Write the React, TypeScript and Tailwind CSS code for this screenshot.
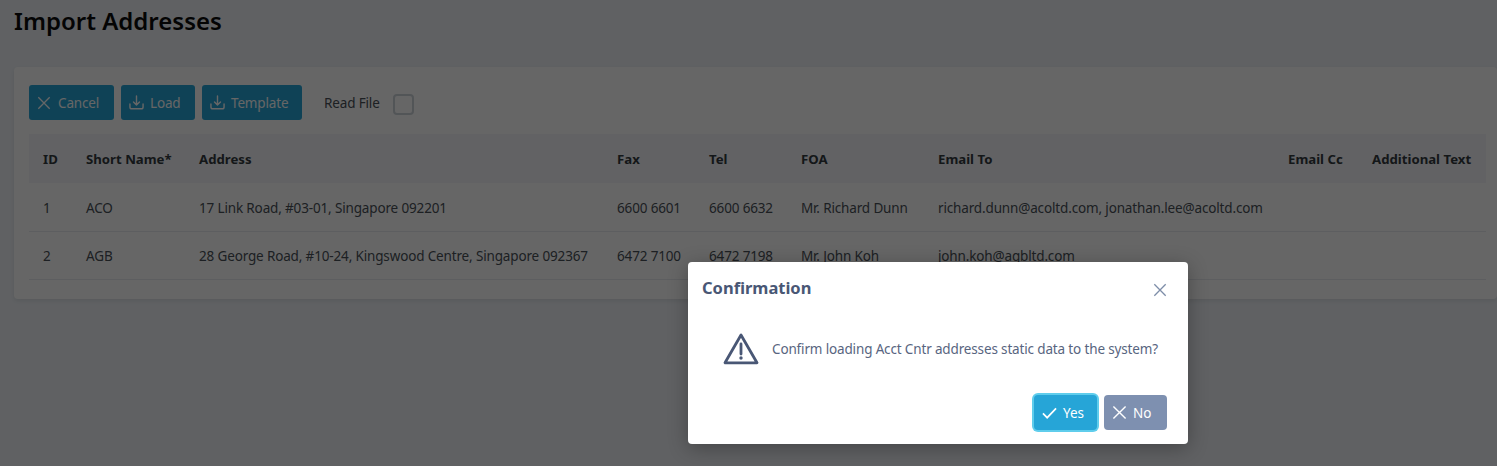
const font = "font-['Noto_Sans','Open_Sans',sans-serif]";

function TimesIcon({ className }: { className?: string }) {
  return (
    <svg viewBox="0 0 16 16" fill="none" stroke="currentColor" strokeWidth="1.5" className={className}>
      <path d="M1.5 1.5l13 13M14.5 1.5l-13 13" />
    </svg>
  );
}

function DownloadIcon({ className }: { className?: string }) {
  return (
    <svg viewBox="0 0 16 16" fill="none" stroke="currentColor" strokeWidth="1.5" strokeLinecap="round" strokeLinejoin="round" className={className}>
      <path d="M8 1v9.5M4.8 7.5L8 10.7l3.2-3.2" />
      <path d="M1 9.5v3.2a2 2 0 0 0 2 2h10a2 2 0 0 0 2-2V9.5" />
    </svg>
  );
}

function CheckIcon({ className }: { className?: string }) {
  return (
    <svg viewBox="0 0 16 12" fill="none" stroke="currentColor" strokeWidth="1.8" className={className}>
      <path d="M1 6.5L5.5 11 15 1" />
    </svg>
  );
}

function WarningIcon({ className }: { className?: string }) {
  return (
    <svg viewBox="0 0 36 32" fill="none" className={className}>
      <path d="M18 2.5L2 30.3h32z" stroke="currentColor" strokeWidth="2.8" strokeLinejoin="round" />
      <path d="M18 11.5v10" stroke="currentColor" strokeWidth="2.8" strokeLinecap="round" />
      <circle cx="18" cy="25.5" r="1.7" fill="currentColor" />
    </svg>
  );
}

function ToolbarButton({ label, icon, width, gap }: { label: string; icon: React.ReactNode; width: string; gap: string }) {
  return (
    <button className={`flex h-[35px] items-center rounded-[3px] bg-[#26a5d7] pl-[8px] text-[13.5px] tracking-[-0.15px] text-white ${width} ${gap}`}>
      {icon}
      <span className="pt-[2px]">{label}</span>
    </button>
  );
}

const rows = [
  {
    id: "1",
    short: "ACO",
    address: "17 Link Road, #03-01, Singapore 092201",
    fax: "6600 6601",
    tel: "6600 6632",
    foa: "Mr. Richard Dunn",
    email: "richard.dunn@acoltd.com, jonathan.lee@acoltd.com",
  },
  {
    id: "2",
    short: "AGB",
    address: "28 George Road, #10-24, Kingswood Centre, Singapore 092367",
    fax: "6472 7100",
    tel: "6472 7198",
    foa: "Mr. John Koh",
    email: "john.koh@agbltd.com",
  },
];

export default function App() {
  return (
    <div className={`relative h-[466px] w-[1497px] overflow-hidden bg-[#eff3f8] ${font}`}>
      <h1 className="pl-[14px] pt-[4px] text-[24px] leading-[33px] font-semibold text-[#0c0c0c]">Import Addresses</h1>

      <div className="mt-[30px] ml-[14px] h-[232px] rounded-[4px] bg-white pt-[18px] pl-[15px] pr-[11px] shadow-[0_2px_4px_rgba(0,0,0,0.08)]">
        <div className="flex items-center gap-[7px]">
          <ToolbarButton label="Cancel" width="w-[85px]" gap="gap-[7px]" icon={<TimesIcon className="size-[14px]" />} />
          <ToolbarButton label="Load" width="w-[74px]" gap="gap-[6px]" icon={<DownloadIcon className="size-[15px]" />} />
          <ToolbarButton label="Template" width="w-[100px]" gap="gap-[6px]" icon={<DownloadIcon className="size-[15px]" />} />
          <span className="ml-[15px] pt-[2px] text-[13.5px] tracking-[-0.15px] text-[#495057]">Read File</span>
          <span className="ml-[6px] mt-[4px] size-[21px] rounded-[4px] border-2 border-[#ced4da] bg-white" />
        </div>

        <table className="mt-[14px] w-[1457px] table-fixed border-collapse text-left text-[13.5px] tracking-[-0.15px] text-[#495057]">
          <thead>
            <tr className="h-[49px] bg-[#f4f6fb] text-[13.2px] font-bold tracking-normal text-[#343a40]">
              <th className="w-[43px] pl-[14px] pt-[3px]">ID</th>
              <th className="w-[113px] pl-[14px] pt-[3px]">Short Name*</th>
              <th className="w-[418px] pl-[14px] pt-[3px]">Address</th>
              <th className="w-[92px] pl-[14px] pt-[3px]">Fax</th>
              <th className="w-[92px] pl-[14px] pt-[3px]">Tel</th>
              <th className="w-[137px] pl-[14px] pt-[3px]">FOA</th>
              <th className="w-[350px] pl-[14px] pt-[3px]">Email To</th>
              <th className="w-[84px] pl-[14px] pt-[3px]">Email Cc</th>
              <th className="pl-[14px] pt-[3px]">Additional Text</th>
            </tr>
          </thead>
          <tbody>
            {rows.map((row) => (
              <tr key={row.id} className="h-[48px] border-b border-[#e9ecef]">
                <td className="pl-[14px] pt-[2px]">{row.id}</td>
                <td className="pl-[14px] pt-[2px]">{row.short}</td>
                <td className="pl-[14px] pt-[2px] whitespace-nowrap">{row.address}</td>
                <td className="pl-[14px] pt-[2px]">{row.fax}</td>
                <td className="pl-[14px] pt-[2px]">{row.tel}</td>
                <td className="pl-[14px] pt-[2px] whitespace-nowrap">{row.foa}</td>
                <td className="pl-[14px] pt-[2px] whitespace-nowrap">{row.email}</td>
                <td className="pl-[14px]" />
                <td className="pl-[14px]" />
              </tr>
            ))}
          </tbody>
        </table>
      </div>

      {/* mask over the page */}
      <div className="absolute inset-0 bg-black/60" />

      <div className="absolute top-[262px] left-[688px] h-[182px] w-[500px] rounded-[4px] bg-white px-[14px] shadow-[0_4px_20px_rgba(0,0,0,0.3)]">
        <div className="flex h-[53px] items-center justify-between">
          <span className="text-[16.5px] font-bold text-[#495775]">Confirmation</span>
          <TimesIcon className="mr-[7px] mt-[2px] size-[14px] text-[#7d8da8]" />
        </div>
        <div className="mt-[17px] flex items-center gap-[13px] pl-[21px]">
          <WarningIcon className="h-[33px] w-[36px] text-[#495775]" />
          <span className="whitespace-nowrap pt-[2px] text-[13.5px] tracking-[-0.15px] text-[#586580]">
            Confirm loading Acct Cntr addresses static data to the system?
          </span>
        </div>
        <div className="mt-[30px] flex items-center justify-end gap-[7px] pr-[7px]">
          <button className="flex h-[35px] w-[63px] items-center gap-[6px] rounded-[4px] bg-[#26a5d7] pl-[8px] text-[13.5px] text-white shadow-[0_0_0_2px_#5fcdec]">
            <CheckIcon className="h-[12px] w-[15px]" />
            <span className="pt-[2px]">Yes</span>
          </button>
          <button className="flex h-[35px] w-[63px] items-center gap-[6px] rounded-[4px] bg-[#7e90b0] pl-[8px] text-[13.5px] text-white">
            <TimesIcon className="size-[15px]" />
            <span className="pt-[2px]">No</span>
          </button>
        </div>
      </div>
    </div>
  );
}
